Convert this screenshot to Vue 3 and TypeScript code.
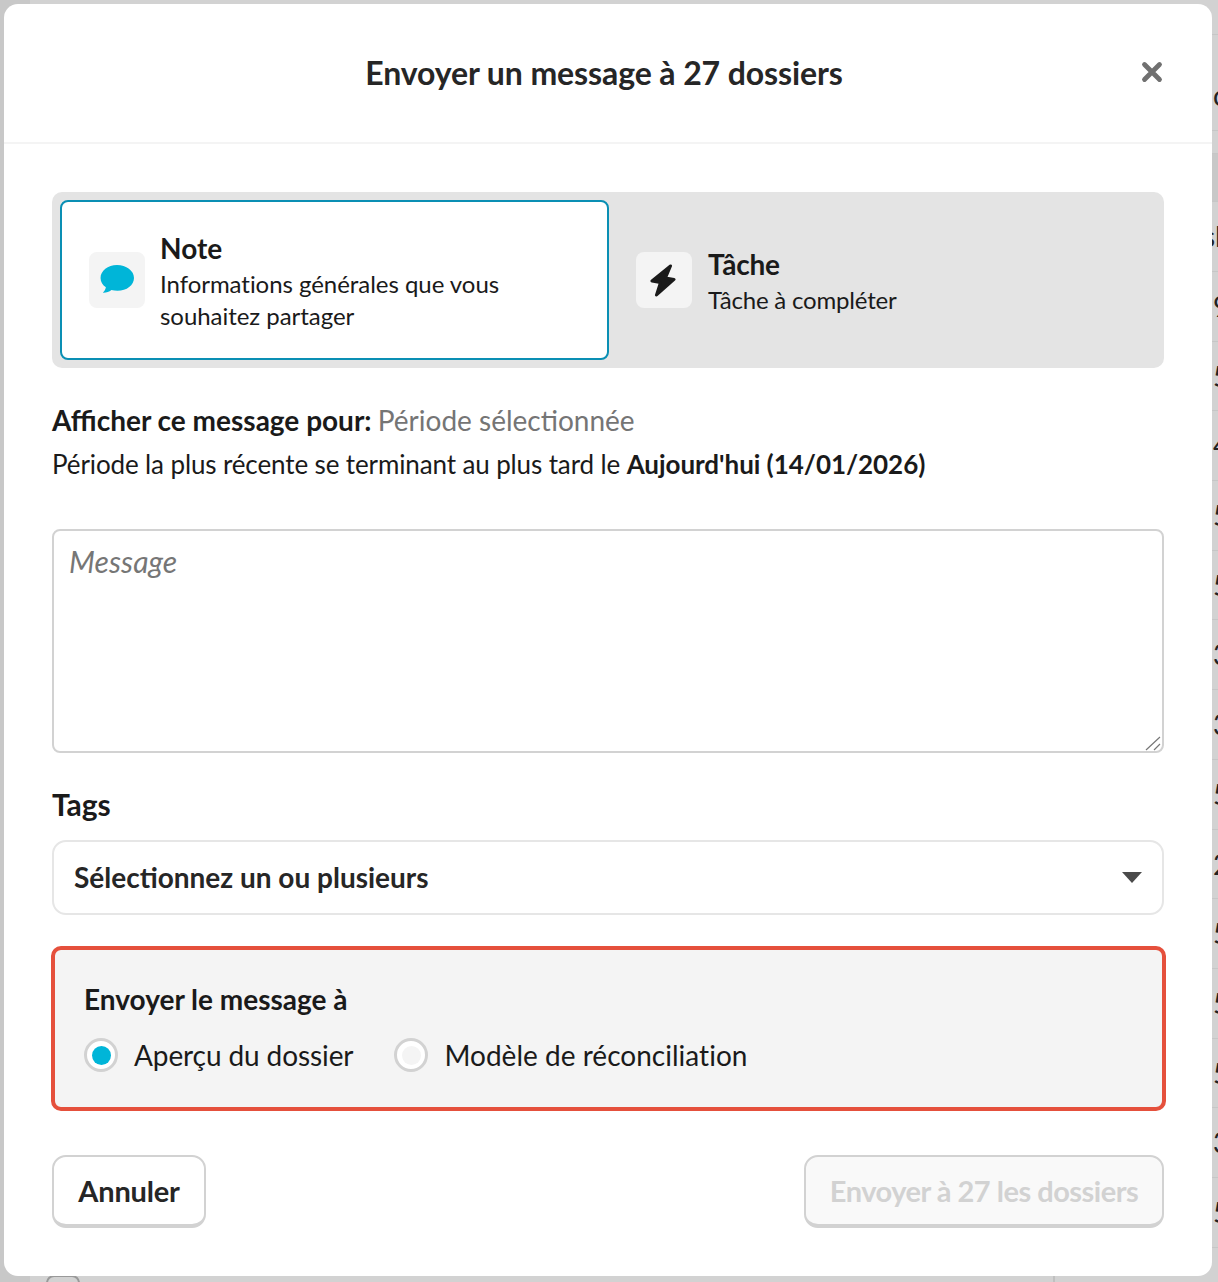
<script setup lang="ts">
import { ref } from 'vue'

const target = ref('apercu')
const topRows = [
  { h: 35, lh: 35, t: '', cls: '' },
  { h: 96, lh: 120, t: 'c', cls: 'first' },
  { h: 23, lh: 23, t: '', cls: '' },
  { h: 48, lh: 48, t: '', cls: 'band' },
  { h: 70, lh: 68, t: 'sl', cls: '' },
]
const rowDigits = ['9', '5', '4', '5', '5', '3', '3', '5', '2', '5', '5', '5', '3', '5']
</script>

<template>
  <div class="page">
    <div class="backdrop">
      <div class="sidebar"></div>
      <div v-for="(r, i) in topRows" :key="i" class="bg-row" :class="r.cls" :style="{ height: r.h + 'px', lineHeight: r.lh + 'px' }">{{ r.t }}</div>
      <div v-for="(d, i) in rowDigits" :key="'d' + i" class="bg-row first">{{ d }}</div>
      <div class="bg-foot">
        <span class="bg-check"></span>
        <span class="bg-date">31/12/2025</span>
        <span class="bg-sep"></span>
        <span class="bg-end">Aujourd'hui</span>
      </div>
    </div>
    <div class="modal">
      <header class="modal-head">
        <h1>Envoyer un message à 27 dossiers</h1>
        <button class="close" aria-label="Fermer">
          <svg width="22" height="22" viewBox="0 0 22 22"><path d="M3.500 3.500l15 15M18.500 3.500l-15 15" stroke="#707070" stroke-width="4.800" stroke-linecap="round" /></svg>
        </button>
      </header>
      <div class="modal-body">
        <div class="type-switch">
          <div class="type active">
            <span class="type-icon">
              <svg class="bubble" width="35" height="32" viewBox="0 0 34 30"><path d="M17.500 1.500C8.600 1.500 1.500 7.200 1.500 14c0 3.600 2 6.800 5.200 9.100-.4 2-1.400 3.900-3 5.300 3 .2 6-.8 8.400-2.600 1.800.5 3.800.7 5.900.7 8.900 0 16-5.600 16-12.500S26.400 1.500 17.500 1.500z" fill="#00b5d8" /></svg>
            </span>
            <div class="type-text">
              <div class="type-title">Note</div>
              <div class="type-desc">Informations générales que vous souhaitez partager</div>
            </div>
          </div>
          <div class="type">
            <span class="type-icon">
              <svg class="bolt" width="26" height="33" viewBox="0 0 26 33"><path d="M20.500 2L2 17l8.500 1.500L6.500 31 24 15.500 15.500 14z" fill="#1a1a1a" stroke="#1a1a1a" stroke-width="3" stroke-linejoin="round" /></svg>
            </span>
            <div class="type-text">
              <div class="type-title">Tâche</div>
              <div class="type-desc">Tâche à compléter</div>
            </div>
          </div>
        </div>

        <p class="show-for"><b>Afficher ce message pour:</b> <span class="muted">Période sélectionnée</span></p>
        <p class="period">Période la plus récente se terminant au plus tard le <b>Aujourd'hui (14/01/2026)</b></p>

        <div class="message-wrap">
          <textarea class="message" placeholder="Message"></textarea>
          <svg class="grip" width="16" height="16" viewBox="0 0 16 16"><path d="M1 15L15 2M9 15l6-6" stroke="#777" stroke-width="1.200" fill="none" /></svg>
        </div>

        <label class="tags-label">Tags</label>
        <div class="select">
          <span>Sélectionnez un ou plusieurs</span>
          <i class="caret"></i>
        </div>

        <div class="send-to">
          <div class="send-title">Envoyer le message à</div>
          <div class="radios">
            <label class="radio" @click="target = 'apercu'">
              <span class="dot" :class="{ on: target === 'apercu' }"></span>Aperçu du dossier
            </label>
            <label class="radio" @click="target = 'modele'">
              <span class="dot" :class="{ on: target === 'modele' }"></span>Modèle de réconciliation
            </label>
          </div>
        </div>

        <footer class="actions">
          <button class="btn cancel">Annuler</button>
          <button class="btn disabled" disabled>Envoyer à 27 les dossiers</button>
        </footer>
      </div>
    </div>
  </div>
</template>

<style>
html, body { margin: 0; background: #d2d2d2; }
</style>

<style scoped>
.page { position: relative; width: 1218px; height: 1282px; overflow: hidden; background: #d2d2d2; font-family: Lato, "Liberation Sans", sans-serif; color: #1a1a1a; }
.backdrop { position: absolute; inset: 0; font-size: 28px; color: #222; }
.sidebar { position: absolute; left: 0; top: 0; bottom: 0; width: 30px; background: #c8c8c8; }
.bg-row { box-sizing: border-box; height: 69.700px; padding-left: 1203px; line-height: 68px; border-bottom: 1px solid #c6c6c6; white-space: nowrap; }
.bg-row.first { padding-left: 1213px; }
.bg-row.band { background: #c8c8c8; }
.bg-foot { position: absolute; left: 46px; top: 1275px; display: flex; align-items: flex-start; font-size: 24px; line-height: 30px; color: #8c8c8c; }
.bg-check { box-sizing: border-box; width: 34px; height: 30px; border: 2px solid #999; border-radius: 8px; }
.bg-date { margin-left: 32px; margin-top: 2px; width: 110px; }
.bg-sep { margin-left: 831px; width: 2px; height: 30px; background: #c0c0c0; }
.bg-end { margin-left: 38px; margin-top: 2px; }
.modal { position: relative; box-sizing: border-box; width: 1208px; height: 1272px; margin: 4px 0 0 4px; background: #fff; border-radius: 14px; }
.modal-head { position: relative; box-sizing: border-box; height: 140px; padding: 0 8px 2px 0; border-bottom: 2px solid #f4f4f4; display: flex; align-items: center; justify-content: center; }
h1 { margin: 0; font-size: 32px; font-weight: 700; color: #262626; letter-spacing: -0.1px; }
.close { position: absolute; right: 49px; top: 57px; padding: 0; border: 0; background: none; line-height: 0; }
.modal-body { padding: 48px 48px 0; }
.type-switch { display: grid; grid-template-columns: 549px 1fr; height: 176px; box-sizing: border-box; padding: 8px; background: #e4e4e4; border-radius: 10px; }
.type { display: flex; align-items: center; gap: 16px; padding-left: 27px; min-width: 0; }
.type.active { background: #fff; border: 2px solid #0a8fb4; border-radius: 8px; box-sizing: border-box; }
.type-icon { flex: none; width: 56px; height: 56px; background: #f4f4f4; border-radius: 8px; display: flex; align-items: center; justify-content: center; }
.bubble { margin: -2px 2px 0 0; }
.bolt { margin-right: 2px; }
.type-text { padding-top: 4px; }
.type-title { margin-bottom: 4px; font-size: 28px; font-weight: 700; line-height: 32px; letter-spacing: -0.3px; }
.type-desc { font-size: 24px; line-height: 32px; width: 400px; letter-spacing: -0.2px; }
.active .type-text { margin-left: -1px; }
.active .type-title { letter-spacing: 0; }
.active .type-desc { letter-spacing: -0.04px; }
.show-for { margin: 34px 0 0; font-size: 28px; line-height: 36px; }
.muted { color: #757575; margin-left: -1px; }
.period { margin: 8px 0 0; font-size: 26px; line-height: 36px; letter-spacing: -0.12px; }
.period b { letter-spacing: -0.04px; }
.message-wrap { position: relative; margin-top: 47px; }
.message { display: block; box-sizing: border-box; width: 100%; height: 224px; padding: 12px 15px; border: 2px solid #d2d2d2; border-radius: 8px; font: italic 30px/36px Lato, sans-serif; letter-spacing: 0.1px; color: #1a1a1a; outline: none; resize: none; }
.message::placeholder { color: #767676; }
.grip { position: absolute; right: 3px; bottom: 2px; }
.tags-label { display: block; margin-top: 33px; font-size: 30px; font-weight: 700; line-height: 36px; letter-spacing: -0.1px; }
.select { display: flex; align-items: center; justify-content: space-between; box-sizing: border-box; height: 75px; margin-top: 18px; padding: 0 20px; border: 2px solid #e6e6e6; border-radius: 14px; font-size: 28px; font-weight: 700; color: #262626; }
.select span { margin-top: -2px; }
.caret { width: 0; height: 0; border-left: 10px solid transparent; border-right: 10px solid transparent; border-top: 11px solid #4a4a4a; }
.send-to { box-sizing: border-box; width: 1115px; height: 165px; margin: 31px 0 0 -1px; padding: 31px 29px 0; background: #f4f4f4; border: 4px solid #e5503c; border-radius: 10px; }
.send-title { font-size: 28px; font-weight: 700; line-height: 36px; }
.radios { display: flex; gap: 41px; margin-top: 20px; }
.radio { display: flex; align-items: center; gap: 16px; font-size: 28px; line-height: 36px; letter-spacing: -0.1px; cursor: pointer; }
.radio + .radio { letter-spacing: 0.02px; }
.dot { box-sizing: border-box; width: 34px; height: 34px; border: 3px solid #d2d2d2; border-radius: 50%; background: #fff; position: relative; }
.dot::after { content: ''; position: absolute; left: 4.500px; top: 4.500px; width: 19px; height: 19px; border-radius: 50%; background: #f4f4f4; }
.dot.on::after { background: #00b5d8; }
.actions { display: flex; justify-content: space-between; margin-top: 44px; }
.btn { box-sizing: border-box; height: 73px; padding: 0; background: #fff; border: 2px solid #d2d2d2; border-bottom-width: 4px; border-radius: 14px; font: 700 29px Lato, sans-serif; color: #262626; }
.btn.cancel { width: 154px; letter-spacing: -0.2px; }
.btn.disabled { width: 360px; background: #f9f9f9; color: #d2d2d2; letter-spacing: -0.5px; }
</style>
